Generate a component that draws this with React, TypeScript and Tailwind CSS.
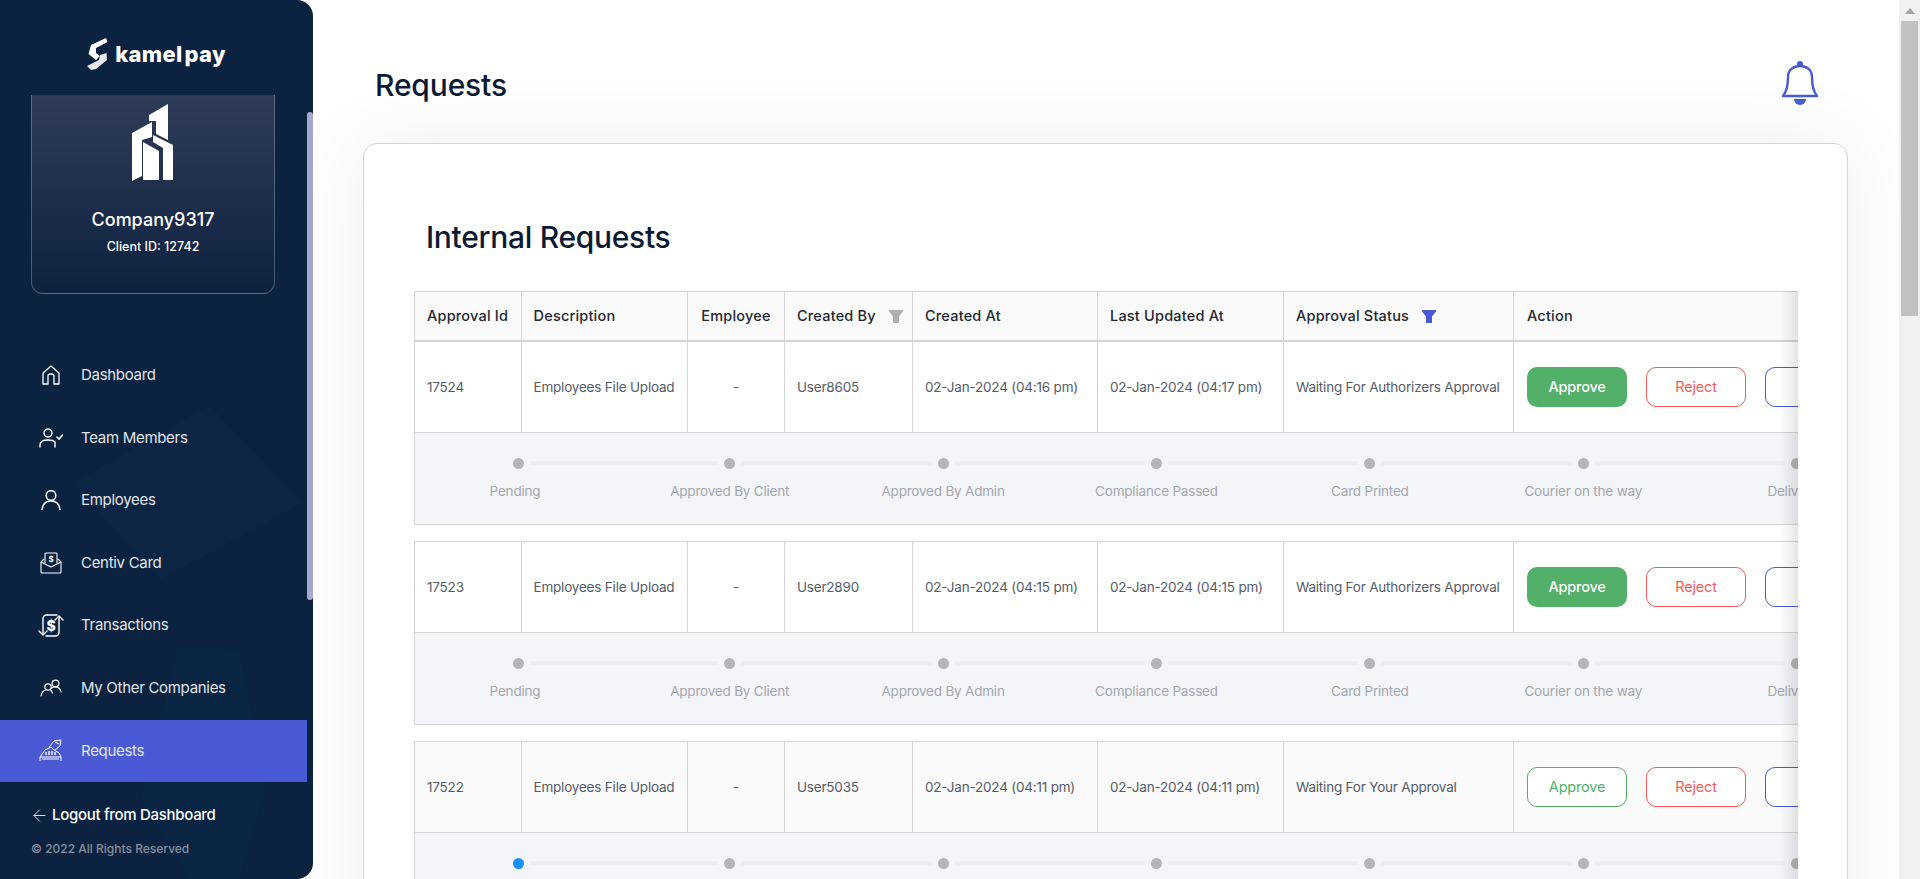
import { ArrowLeft } from "lucide-react";

const cols = "grid grid-cols-[106.5px_166.5px_97px_128px_185px_186px_230px_1fr]";
const cell = "border-r border-[#d4d4d4] pl-[12px] flex items-center whitespace-nowrap";
const centerCell = "border-r border-[#d4d4d4] flex items-center justify-center whitespace-nowrap";

const steps = ["Pending", "Approved By Client", "Approved By Admin", "Compliance Passed", "Card Printed", "Courier on the way", "Delivered"];

const rows = [
  { id: "17524", user: "User8605", created: "02-Jan-2024 (04:16 pm)", updated: "02-Jan-2024 (04:17 pm)", status: "Waiting For Authorizers Approval", filled: true, first: false },
  { id: "17523", user: "User2890", created: "02-Jan-2024 (04:15 pm)", updated: "02-Jan-2024 (04:15 pm)", status: "Waiting For Authorizers Approval", filled: true, first: false },
  { id: "17522", user: "User5035", created: "02-Jan-2024 (04:11 pm)", updated: "02-Jan-2024 (04:11 pm)", status: "Waiting For Your Approval", filled: false, first: true },
];

function Funnel({ color }: { color: string }) {
  return (
    <svg width="14" height="13" viewBox="0 0 14 13" className="ml-[13px]">
      <polygon points="0,0 14,0 14,1.5 10,6.5 10,13 4,13 4,6.5 0,1.5" fill={color} />
    </svg>
  );
}

function Logo() {
  return (
    <div className="h-[95px] flex items-center justify-center pt-[13px] shrink-0">
      <svg width="21" height="33" viewBox="0 0 21 33" className="mr-[7px]">
        <polygon points="20.5,4 19,0 4,7 1.5,16 9,22 13,18 9,15 9,10" fill="#fff" />
        <polygon points="19.5,15 20,22 9,31 4,32 0,28 12,22 13,17" fill="#e9e9e9" />
      </svg>
      <span className="text-white text-[22px] font-extrabold tracking-[0.3px] leading-none">
        kamel<span className="ml-[2px]">pay</span>
      </span>
    </div>
  );
}

function CompanyCard() {
  return (
    <div className="mx-[31px] w-[244px] h-[199px] shrink-0 rounded-b-[12px] border-x border-b border-white/25 bg-gradient-to-b from-[#2f3c57] to-[#0d2240] flex flex-col items-center">
      <svg width="42" height="78" viewBox="0 0 42 78" className="mt-[9px]">
        <polygon points="17,11 36,0 36,36 24,30 24,17 17,17" fill="#fff" />
        <polygon points="0,29 20,18 20,33 10,36 10,72 0,77" fill="#fff" />
        <polygon points="11,38 27,47 27,76 11,76" fill="#fff" />
        <polygon points="21,31 41,41 41,76 31,76 31,44 21,38" fill="#fff" />
      </svg>
      <div className="mt-[26px] text-white text-[18px] font-medium leading-[24px]">Company9317</div>
      <div className="mt-[6px] text-white text-[12.5px] font-medium leading-[18px]">Client ID: 12742</div>
    </div>
  );
}

function HomeIcon() {
  return (
    <svg width="20" height="20" viewBox="0 0 20 20" fill="none" stroke="#fff" strokeWidth="1.3">
      <path d="M2 19 V8 L10 1 L18 8 V19 H13 V11 Q13 9 10 9 Q7 9 7 11 V19 Z" strokeLinejoin="round" />
    </svg>
  );
}

function TeamIcon() {
  return (
    <svg width="24" height="20" viewBox="0 0 24 20" fill="none" stroke="#fff" strokeWidth="1.4" strokeLinecap="round">
      <circle cx="9" cy="5" r="4" />
      <path d="M1 19 V17 Q1 12 9 12 Q14 12 16 14 V19" />
      <path d="M18 9 L20 11 L23.5 7" strokeWidth="1.6" />
    </svg>
  );
}

function UserIcon() {
  return (
    <svg width="20" height="20" viewBox="0 0 20 20" fill="none" stroke="#fff" strokeWidth="1.5" strokeLinecap="round">
      <circle cx="10" cy="5.5" r="4.8" />
      <path d="M1 19.5 Q2 11 10 11 Q18 11 19 19.5" />
    </svg>
  );
}

function CardIcon() {
  return (
    <svg width="22" height="22" viewBox="0 0 22 22" fill="none" stroke="#fff" strokeWidth="1.1" strokeLinejoin="round">
      <path d="M4 7 L1 10 V20 Q1 21 2 21 H20 Q21 21 21 20 V10 L18 7" />
      <path d="M1 10 L11 15 L21 10" />
      <path d="M5 11 V2 Q5 1 6 1 H16 Q17 1 17 2 V11" />
      <text x="11" y="10" fontSize="8" fontWeight="700" fill="#fff" stroke="none" textAnchor="middle" fontFamily="Inter">$</text>
    </svg>
  );
}

function TransactionsIcon() {
  return (
    <svg width="26" height="23" viewBox="0 0 26 23" fill="none" stroke="#fff" strokeWidth="1.4" strokeLinecap="round" strokeLinejoin="round">
      <path d="M5 20 V5 Q5 1 9 1 H19" />
      <path d="M1 17 L5 21 L9 17" />
      <path d="M21 3 V18 Q21 22 17 22 H8" />
      <path d="M17 6 L21 2 L25 6" />
      <text x="13" y="16.5" fontSize="14" fontWeight="800" fill="#fff" stroke="none" textAnchor="middle" fontFamily="Inter">$</text>
    </svg>
  );
}

function CompaniesIcon() {
  return (
    <svg width="22" height="18" viewBox="0 0 22 18" fill="none" stroke="#fff" strokeWidth="1.2" strokeLinecap="round">
      <circle cx="8" cy="8" r="3.2" />
      <path d="M1 17 Q2 12 5 11.5 M11 11.5 Q12 12.5 12.5 14" />
      <circle cx="15.5" cy="4.5" r="3.4" />
      <path d="M11 9.5 Q13 8 15.5 8 Q20 8 21 13" />
    </svg>
  );
}

function RequestsIcon() {
  return (
    <svg width="23" height="23" viewBox="0 0 23 23" fill="none" stroke="#fff" strokeWidth="1" strokeLinejoin="round">
      <path d="M1 22 V18 L6 11 L12 8 L15 11 L20 14 L22 18 V22" />
      <path d="M1 18 H22 M3 20 H20" />
      <path d="M10 8 L15 2 L22 1 L21 7 L16 11" />
      <path d="M16 3 L20 5" />
      <path d="M7 16 V13 M10 16 V12 M13 16 V12 M16 16 V13" strokeWidth="1.4" />
    </svg>
  );
}

const nav = [
  { label: "Dashboard", icon: <HomeIcon /> },
  { label: "Team Members", icon: <TeamIcon /> },
  { label: "Employees", icon: <UserIcon /> },
  { label: "Centiv Card", icon: <CardIcon /> },
  { label: "Transactions", icon: <TransactionsIcon /> },
  { label: "My Other Companies", icon: <CompaniesIcon /> },
  { label: "Requests", icon: <RequestsIcon />, active: true },
];

function Sidebar() {
  return (
    <aside className="relative w-[313px] h-full shrink-0 bg-[#0b2240] rounded-r-[16px] overflow-hidden flex flex-col">
      <svg width="313" height="879" viewBox="0 0 313 879" className="absolute left-0 top-0">
        <polygon points="73,483 210,405 303,503 160,580" fill="#0d2545" />
        <polygon points="178,645 240,650 265,790 240,879 190,879 140,800" fill="#0a2444" />
      </svg>
      <div className="absolute right-0 top-[112px] w-[6px] h-[488px] rounded-[3px] bg-[#a5a9cf]" />
      <div className="relative flex flex-col">
        <Logo />
        <CompanyCard />
        <nav className="mt-[50px] w-[307px] flex flex-col">
          {nav.map((n) => (
            <div key={n.label} className={`h-[62.6px] flex items-center ${n.active ? "bg-[#4a5ad4]" : ""}`}>
              <div className="w-[81px] pl-[37px] pr-[17px] flex items-center justify-center shrink-0">{n.icon}</div>
              <span className="text-[#e2e5ea] text-[15px] tracking-[-0.3px]">{n.label}</span>
            </div>
          ))}
        </nav>
        <div className="mt-[21px] pl-[30px] flex items-center h-[24px]">
          <ArrowLeft size={19} strokeWidth={1.2} color="#dfe3ea" />
          <span className="ml-[3px] text-white text-[15px] font-medium tracking-[-0.3px]">Logout from Dashboard</span>
        </div>
        <div className="mt-[13px] pl-[31px] text-[#868f9e] text-[12px] font-medium leading-[18px]">© 2022 All Rights Reserved</div>
      </div>
    </aside>
  );
}

function Timeline({ firstActive }: { firstActive: boolean }) {
  return (
    <div className="h-[92px] bg-[#f4f5f9] border-b border-[#d4d4d4] pt-[24px]">
      <div className="flex -ml-[2px]">
        {steps.map((s, i) => (
          <div key={s} className={`${i === 0 ? "w-[210px]" : "w-[213.4px]"} shrink-0 flex flex-col items-center`}>
            <div className="w-full flex items-center h-[12px]">
              <div className={`flex-1 h-[4px] ${i === 0 ? "" : "bg-[#eeeff1]"}`} />
              <div className={`mx-[6px] w-[11px] h-[11px] rounded-full ${i === 0 && firstActive ? "bg-[#1890ff]" : "bg-[#b4b5ba]"}`} />
              <div className={`flex-1 h-[4px] ${i === steps.length - 1 ? "" : "bg-[#eeeff1]"}`} />
            </div>
            <div className={`mt-[12px] text-[13.5px] leading-[20px] text-[#a3a7af] tracking-[-0.2px] whitespace-nowrap ${i === 0 ? "pr-[6px]" : ""}`}>{s}</div>
          </div>
        ))}
      </div>
    </div>
  );
}

function ActionButtons({ filled }: { filled: boolean }) {
  return (
    <div className="flex items-center pl-[13px] gap-[19px] h-full">
      <button className={`w-[100px] h-[40px] rounded-[10px] text-[14.5px] ${filled ? "bg-[#52b069] text-white font-medium" : "bg-white border border-[#52b069] text-[#52b069]"}`}>Approve</button>
      <button className="w-[100px] h-[40px] rounded-[10px] bg-white border border-[#f25a5a] text-[#f25a5a] text-[14.5px]">Reject</button>
      <button className="w-[100px] h-[40px] rounded-[10px] bg-white border border-[#4a5ad4] text-[#4a5ad4] text-[14.5px]">View</button>
    </div>
  );
}

function Row({ r }: { r: (typeof rows)[number] }) {
  return (
    <div className={`${cols} h-[91px] border-b border-[#d4d4d4] text-[13.5px] text-[#555c68] tracking-[-0.2px] ${r.first ? "bg-[#fafafa]" : "bg-white"}`}>
      <div className={cell}>{r.id}</div>
      <div className={cell}>Employees File Upload</div>
      <div className={centerCell}>-</div>
      <div className={cell}>{r.user}</div>
      <div className={cell}>{r.created}</div>
      <div className={cell}>{r.updated}</div>
      <div className={cell}>{r.status}</div>
      <ActionButtons filled={r.filled} />
    </div>
  );
}

function Header() {
  return (
    <div className={`${cols} h-[50px] bg-[#fafafa] border-b-2 border-[#d4d4d4] text-[14.5px] font-medium text-[#222831] tracking-[0.2px]`}>
      <div className={cell}>Approval Id</div>
      <div className={cell}>Description</div>
      <div className={centerCell}>Employee</div>
      <div className={cell}>Created By<Funnel color="#b0b0b0" /></div>
      <div className={cell}>Created At</div>
      <div className={cell}>Last Updated At</div>
      <div className={cell}>Approval Status<Funnel color="#4a5ad4" /></div>
      <div className="pl-[13px] flex items-center">Action</div>
    </div>
  );
}

export default function App() {
  return (
    <div className="h-screen w-full flex overflow-hidden bg-white font-['Inter',sans-serif]">
      <Sidebar />
      <main className="flex-1 min-w-0 h-full overflow-hidden">
        <div className="h-[143px] pt-[28px] pl-[62px] pr-[80px] flex items-center justify-between">
          <h1 className="text-[30px] font-medium text-[#0b1a33] tracking-[-0.15px]">Requests</h1>
          <svg width="38" height="45" viewBox="0 0 38 45" className="mb-[5px]" fill="none">
            <circle cx="19" cy="3" r="3" fill="#4a5ad4" />
            <path d="M2 35 C6 30 7 22 7 16 C7 9 12 5 19 5 C26 5 31 9 31 16 C31 22 32 30 36 35 Z" stroke="#4a5ad4" strokeWidth="2.4" strokeLinejoin="round" />
            <path d="M13 38 H25 A6 6 0 0 1 13 38 Z" fill="#4a5ad4" />
          </svg>
        </div>
        <div className="ml-[50px] w-[1485px] h-[1200px] bg-white border border-[#d4d4d4] rounded-[14px] shadow-[0_0_80px_rgba(40,50,90,0.08)]">
          <h2 className="h-[147px] pl-[62px] pt-[43px] text-[30px] font-medium text-[#0b1a33] tracking-[-0.3px] leading-[100px]">Internal Requests</h2>
          <div className="relative ml-[50px] w-[1384px] overflow-hidden">
            <div className="w-[1600px]">
              {rows.map((r, i) => (
                <div key={r.id} className={`border-l border-t border-[#d4d4d4] ${i < rows.length - 1 ? "mb-[16px]" : ""}`}>
                  {i === 0 && <Header />}
                  <Row r={r} />
                  <Timeline firstActive={r.first} />
                </div>
              ))}
            </div>
            <div className="absolute right-0 top-0 bottom-0 w-[18px] bg-gradient-to-l from-black/10 to-transparent" />
          </div>
        </div>
      </main>
      <div className="w-[21px] h-full shrink-0 bg-[#f1f1f1] flex flex-col items-center">
        <div className="h-[21px] flex items-center justify-center">
          <svg width="10" height="6" viewBox="0 0 10 6"><polygon points="5,0 10,6 0,6" fill="#a3a3a3" /></svg>
        </div>
        <div className="w-[17px] h-[295px] bg-[#c1c1c1]" />
      </div>
    </div>
  );
}
